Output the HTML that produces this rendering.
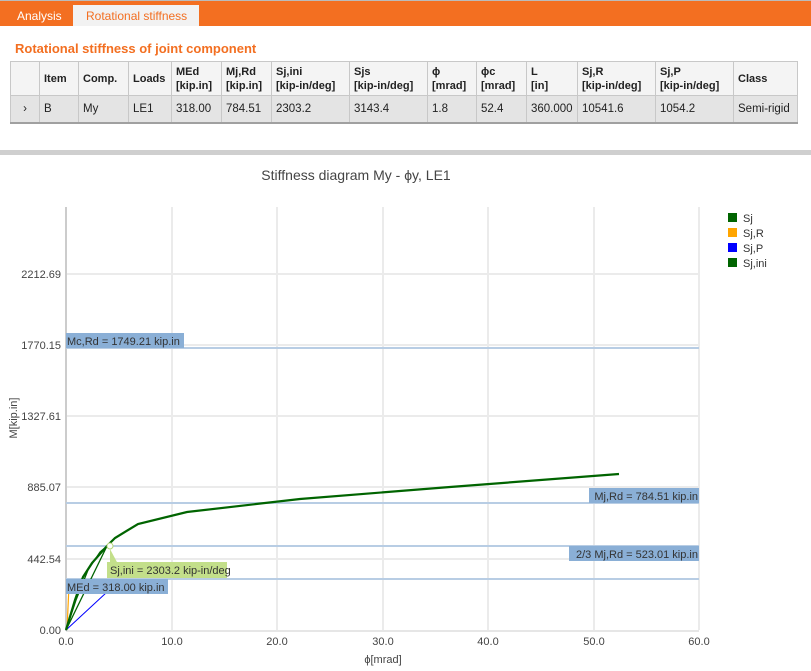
<!DOCTYPE html><html><head><style>
body{margin:0;width:811px;height:671px;position:relative;background:#fff;font-family:"Liberation Sans",sans-serif;overflow:hidden}
.a{position:absolute}
table{border-collapse:collapse;position:absolute;left:10px;top:61px;font-size:11.5px;color:#222;table-layout:fixed;border:1px solid #aaa;border-bottom:2px solid #a0a0a0}
td{border:1px solid #c8c8c8;padding:0 4px;vertical-align:middle;line-height:14px}
tr.h td{background:#f4f4f4;height:33px;font-weight:bold;font-size:11px}
tr.r td{background:#e4e4e4;height:26px}
</style></head><body>
<div class="a" style="left:0;top:0;width:811px;height:1px;background:#bbb"></div>
<div class="a" style="left:0;top:1px;width:811px;height:25px;background:#f36f21"></div>
<div class="a" style="left:17px;top:9px;color:#fff;font-size:12px">Analysis</div>
<div class="a" style="left:73px;top:5px;width:126px;height:21px;background:#f2f2f2"></div>
<div class="a" style="left:86px;top:9px;color:#f36f21;font-size:12px">Rotational stiffness</div>
<div class="a" style="left:15px;top:41px;color:#f36f21;font-size:13px;font-weight:bold">Rotational stiffness of joint component</div>
<table>
<colgroup><col style="width:29px"><col style="width:39px"><col style="width:50px"><col style="width:43px"><col style="width:50px"><col style="width:50px"><col style="width:78px"><col style="width:78px"><col style="width:49px"><col style="width:50px"><col style="width:51px"><col style="width:78px"><col style="width:78px"><col style="width:64px"></colgroup>
<tr class="h"><td></td><td>Item</td><td>Comp.</td><td>Loads</td><td>MEd<br>[kip.in]</td><td>Mj,Rd<br>[kip.in]</td><td>Sj,ini<br>[kip-in/deg]</td><td>Sjs<br>[kip-in/deg]</td><td>ϕ<br>[mrad]</td><td>ϕc<br>[mrad]</td><td>L<br>[in]</td><td>Sj,R<br>[kip-in/deg]</td><td>Sj,P<br>[kip-in/deg]</td><td>Class</td></tr>
<tr class="r"><td style="text-align:center">›</td><td>B</td><td>My</td><td>LE1</td><td>318.00</td><td>784.51</td><td>2303.2</td><td>3143.4</td><td>1.8</td><td>52.4</td><td>360.000</td><td>10541.6</td><td>1054.2</td><td>Semi-rigid</td></tr>
</table>
<div class="a" style="left:0;top:150px;width:811px;height:5px;background:#cfcfcf"></div>
<svg class="a" style="left:0;top:0" width="811" height="671" font-family="Liberation Sans, sans-serif">
<text x="356" y="180" font-size="14" fill="#444" text-anchor="middle">Stiffness diagram My - ϕy, LE1</text>
<g stroke="#ebebeb" stroke-width="2">
<line x1="172" y1="207" x2="172" y2="630"/><line x1="277" y1="207" x2="277" y2="630"/><line x1="383" y1="207" x2="383" y2="630"/><line x1="488" y1="207" x2="488" y2="630"/><line x1="594" y1="207" x2="594" y2="630"/><line x1="699" y1="207" x2="699" y2="630"/>
<line x1="66" y1="274" x2="699" y2="274"/><line x1="66" y1="345" x2="699" y2="345"/><line x1="66" y1="416" x2="699" y2="416"/><line x1="66" y1="487" x2="699" y2="487"/><line x1="66" y1="559" x2="699" y2="559"/>
</g>
<line x1="66" y1="207" x2="66" y2="631" stroke="#ccc" stroke-width="2"/>
<line x1="66" y1="631" x2="699" y2="631" stroke="#ccc" stroke-width="1"/>
<g stroke="#b8cde4" stroke-width="2"><line x1="66" y1="348" x2="699" y2="348"/><line x1="66" y1="503" x2="699" y2="503"/><line x1="66" y1="546" x2="699" y2="546"/><line x1="66" y1="579" x2="699" y2="579"/></g>
<g font-size="11" fill="#444" text-anchor="end">
<text x="61" y="278">2212.69</text><text x="61" y="349">1770.15</text><text x="61" y="420">1327.61</text><text x="61" y="491">885.07</text><text x="61" y="563">442.54</text><text x="61" y="634">0.00</text></g>
<g font-size="11" fill="#444" text-anchor="middle">
<text x="66" y="645">0.0</text><text x="172" y="645">10.0</text><text x="277" y="645">20.0</text><text x="383" y="645">30.0</text><text x="488" y="645">40.0</text><text x="594" y="645">50.0</text><text x="699" y="645">60.0</text>
<text x="383" y="663">ϕ[mrad]</text></g>
<text x="17" y="418" font-size="11" fill="#444" text-anchor="middle" transform="rotate(-90 17 418)">M[kip.in]</text>
<line x1="67" y1="630" x2="69" y2="585" stroke="orange" stroke-width="1.2"/>
<line x1="66" y1="630" x2="120" y2="580" stroke="#00f" stroke-width="1"/>
<line x1="66" y1="630" x2="107" y2="546" stroke="#006400" stroke-width="1.3"/>
<polyline points="66,630 76,600 88,570 100,552 107,546" fill="none" stroke="#006400" stroke-width="1.3"/>
<polyline points="66,630 75,600 83,577 92,563 107,546 115,538 138,524 187,512 300,499 450,487 619,474" fill="none" stroke="#006400" stroke-width="2.2"/>
<circle cx="110" cy="546" r="3" fill="#fff" stroke="#b5d67a"/>
<polygon points="110,549 118,564 110,564" fill="#c3df8a"/>
<rect x="107" y="562" width="120" height="16" fill="#c3df8a"/>
<text x="110" y="574" font-size="11" fill="#333">Sj,ini = 2303.2 kip-in/deg</text>
<g fill="#8aafd6"><rect x="66" y="333" width="118" height="15"/><rect x="66" y="579" width="102" height="15"/><rect x="589" y="488" width="110" height="15"/><rect x="569" y="546" width="130" height="15"/></g>
<g font-size="11" fill="#333"><text x="67" y="345">Mc,Rd = 1749.21 kip.in</text><text x="67" y="591">MEd = 318.00 kip.in</text><text x="698" y="500" text-anchor="end">Mj,Rd = 784.51 kip.in</text><text x="698" y="558" text-anchor="end">2/3 Mj,Rd = 523.01 kip.in</text></g>
<g font-size="11" fill="#333"><rect x="728" y="213" width="9" height="9" fill="#006400"/><text x="743" y="222">Sj</text>
<rect x="728" y="228" width="9" height="9" fill="orange"/><text x="743" y="237">Sj,R</text>
<rect x="728" y="243" width="9" height="9" fill="#00f"/><text x="743" y="252">Sj,P</text>
<rect x="728" y="258" width="9" height="9" fill="#006400"/><text x="743" y="267">Sj,ini</text></g>
</svg>
</body></html>
